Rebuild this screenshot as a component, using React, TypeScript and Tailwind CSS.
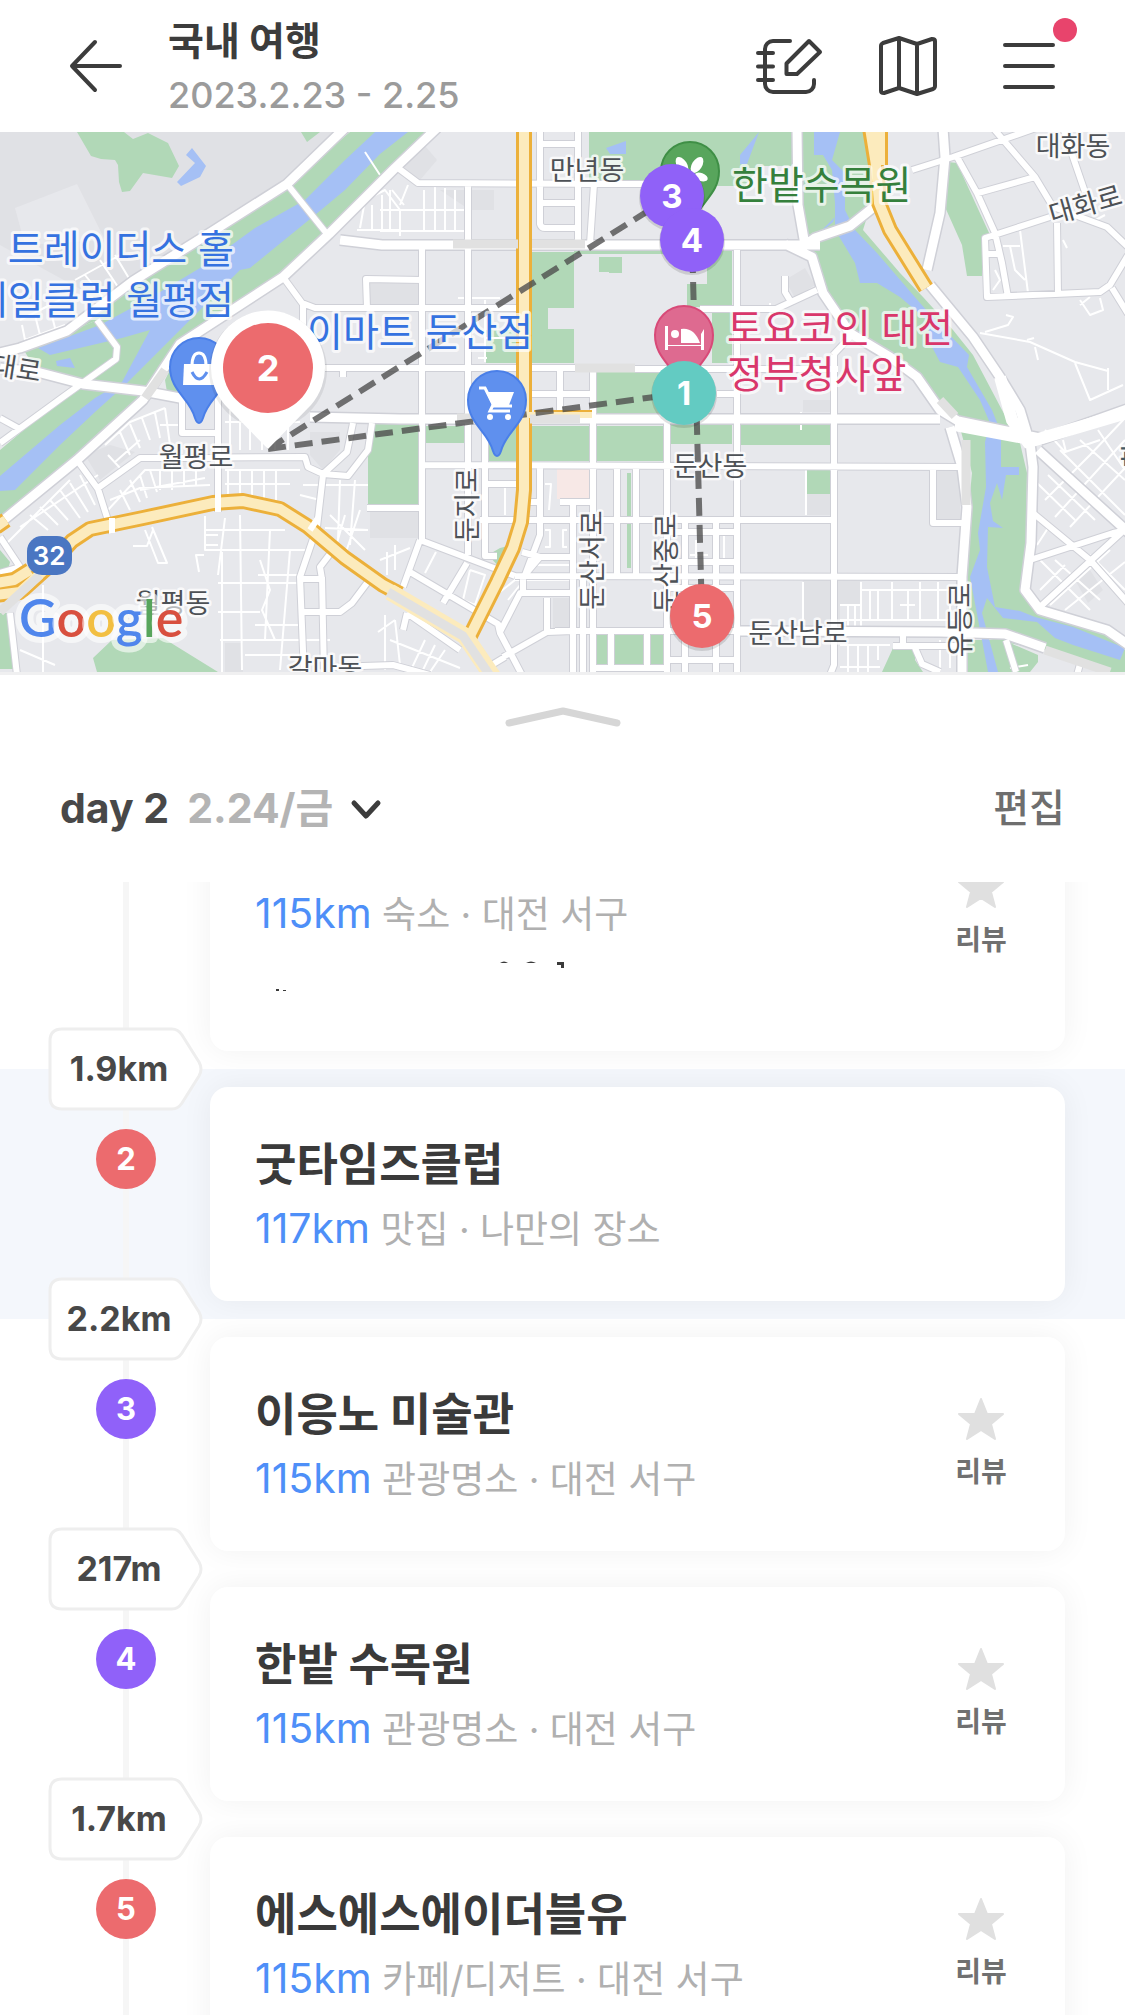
import clsx from "clsx";

type Place = {
  order: number;
  name: string;
  distance: string;
  category: string;
  color: string;
  next?: string;
  review?: boolean;
  memo?: boolean;
  active?: boolean;
};

const places: Place[] = [
  {
    order: 1,
    name: "토요코인 대전 정부청사앞",
    distance: "115km",
    category: "숙소 · 대전 서구",
    color: "bg-[#63cbc2]",
    next: "1.9km",
    review: true,
    memo: true,
  },
  {
    order: 2,
    name: "굿타임즈클럽",
    distance: "117km",
    category: "맛집 · 나만의 장소",
    color: "bg-[#ec6b6e]",
    next: "2.2km",
    active: true,
  },
  {
    order: 3,
    name: "이응노 미술관",
    distance: "115km",
    category: "관광명소 · 대전 서구",
    color: "bg-[#9061f9]",
    next: "217m",
    review: true,
  },
  {
    order: 4,
    name: "한밭 수목원",
    distance: "115km",
    category: "관광명소 · 대전 서구",
    color: "bg-[#9061f9]",
    next: "1.7km",
    review: true,
  },
  {
    order: 5,
    name: "에스에스에이더블유",
    distance: "115km",
    category: "카페/디저트 · 대전 서구",
    color: "bg-[#ec6b6e]",
    review: true,
  },
];

const iconProps = {
  fill: "none",
  stroke: "#3c3c3c",
  strokeWidth: 4,
  strokeLinecap: "round" as const,
  strokeLinejoin: "round" as const,
};

const Header = () => (
  <header className="flex h-[132px] shrink-0 items-center bg-white px-[66px]">
    <button type="button" aria-label="뒤로" className="w-[60px]">
      <svg className="h-[60px] w-[60px]" viewBox="0 0 60 60" {...iconProps}>
        <path d="M29 6 6 30l23 24M6 30h48" />
      </svg>
    </button>
    <div className="ml-[42px] flex-1 pt-1 whitespace-nowrap">
      <h1 className="text-[39px] leading-[54px] font-bold text-[#3c3c3c]">
        국내 여행
      </h1>
      <p className="text-[36px] leading-[54px] font-medium text-[#9b9b9b]">
        2023.2.23 - 2.25
      </p>
    </div>
    <div className="flex items-center gap-14">
      <button type="button" aria-label="여행 기록">
        <svg className="h-[60px] w-[68px]" viewBox="756 37 68 60" {...iconProps}>
          <path d="M791 42h-17a8 8 0 0 0-8 8v35a8 8 0 0 0 8 8h33a8 8 0 0 0 8-8v-4" />
          <path d="M759 54h15M759 67.500h15M759 81h15" />
          <path d="M810 42l11 11-23 22h-10.500V64.500z" />
        </svg>
      </button>
      <button type="button" aria-label="지도">
        <svg className="h-[60px] w-[64px]" viewBox="880 36 64 60" {...iconProps}>
          <path d="M882 46q0-2 2-3l16-5 18 6 15-5q3-0 3 2v45q0 2-2 3l-16 5-18-6-15 5q-3 0-3-2zM900 39v48M918 44v48" />
        </svg>
      </button>
      <button type="button" aria-label="메뉴" className="relative">
        <svg className="h-[60px] w-[60px]" viewBox="999 36 60 60" {...iconProps}>
          <path d="M1005 45h48M1005 66h48M1005 87h48" />
        </svg>
        <span className="absolute -top-[18px] -right-[18px] h-6 w-6 rounded-full bg-[#e8446c]" />
      </button>
    </div>
  </header>
);

// roads are grouped by width so that the casing can be drawn under all of them
const wideRoads =
  "M345 128 287 184 213 231 133 281 67 331 20 348 0 353M437 128 395 168 329 234 283 277 180 344 143 400 77 460 0 523M340 240 382 245 820 245M0 368 37 372 83 384 143 391 180 398M310 417 400 419 940 419M797 128 798 205 805 245 815 238 850 226 875 206M785 244 812 257 823 293 850 333 890 357 917 377 940 410 958 421 1040 438M930 285 973 337 1000 377 1020 410 1030 443 1033 467 1031 543 1025 590 1040 610 1107 630 1130 646M1038 450 1130 534M1040 440 1130 408M943 128 945 157 940 213 927 270M950 427 962 467 967 507 962 577 962 675M740 631 940 632 1005 634 1045 648";

const roads =
  "M287 184 327 234M97 320 117 347 116 359 63 397 0 443M283 277 302 303 315 308 520 308M303 305 303 345M367 308 366 279 422 280M394 165 418 183 645 184M422 249V540M468 183V555M540 128V224Q541 228 545 228H578M578 128V244M540 144H578M540 203H578M594 184 590 244M325 368H575M635 369 838 369M737 250V675M834 355V665L830 675M667 420V675M593 368V675M560 368V418M528 394H593M717 394H737M422 465 962 467M480 520H832M515 576 962 577M555 631H745M485 484H518M528 502H540M560 502H593M485 425V556H497M540 465V535L525 575M573 505V675M583 576V675M617 468V576M636 468V576M912 170 953 157 1036 128M957 157 977 193 995 233 1002 263 1008 297M993 128 1035 177 1053 207 1107 227 1128 247M978 193 1035 177M1050 217 985 238 987 297 1100 292 1110 285 1128 255M1057 223 1058 293M1112 288 1128 314M1063 128 1085 192M985 254H1000M700 309 776 309 817 290M785 276V292L791 302M833 355 852 335M933 468V523H962M1033 513 1090 560 1128 603M1030 560 1113 533 1128 530M1040 607 1122 532M77 460 98 489 112 533M98 488 140 458 305 457 308 467 323 474 347 452 353 423M323 474 348 476 368 450 372 423M323 475 317 527 300 577 304 675M182 392V433H218M218 385V512M322 577 324 675M300 579H322L320 567 333 550M303 612H340L352 603 367 583M333 667 393 665 430 675M367 508H422M0 537 20 567 0 573M10 613 17 675M420 540 515 576M420 540 403 587M410 572 498 624 500 633 522 675M467 563 443 603M503 657 547 632 573 631M547 598V632M500 632 520 593H573M523 577V593M522 552 540 557H573M523 577 540 557M407 613 460 650M403 630 407 613M505 657 480 672M685 520V675M716 520V675M667 532H737M667 562H737M667 588H737M667 660H737M593 668H667M611 632V668M647 632V668M903 632V648M893 646H962M915 648 922 664 940 672M1006 640 1016 672M1080 664 1077 675M303 308V325M0 418 18 428M343 377V368";

const lanes =
  "M365 152 380 175M357 230 400 230M360 228 365 200 385 190 400 210M372 205 372 230M382 195 382 230M380 210H465M380 231H465M390 190V231M400 210V236M424 190V231M435 186V231M445 188V231M455 190V231M408 185 400 205M392 190 404 205M75 280 120 255M85 275 105 300M100 260 120 290M115 255 130 280M20 320 60 300M22 325 25 340 65 325M35 315 40 335M50 308 55 328M105 445 130 422 165 408M115 462 140 440M130 424 140 448M120 432 130 455M142 418 150 440M155 413 160 438M165 408 170 445M160 425H182M108 455 120 468M20 527 98 475M5 545 30 520 70 480M30 515 48 530M40 507 58 525M50 500 68 520M60 490 80 518M70 483 88 512M80 475 95 505M108 510 145 470 205 470M110 500 140 488 210 485M120 490 130 510M130 480 140 502M140 475 147 498M150 470 157 492M160 470V490M172 465V490M184 470V488M196 470V486M140 490 205 478M225 422H300M230 410V450M240 408V450M250 412V450M262 415V450M275 425V450M288 425V450M225 470H300M228 470V500M240 470V497M252 470V498M264 470V500M276 470V505M225 484H290M303 485H368M300 495 320 500M340 480 338 540M355 480 350 545M330 515 365 550M325 528 368 530M345 515 335 550M360 510 345 555M205 516 205 550H310M225 518 218 575M240 515 242 670M270 530 265 640M290 550 280 670M205 530H285M218 583H300M218 612H260M220 640H330M222 552 222 672M258 575H300M260 560 270 590 262 610 275 640M255 625H300M245 655H300M204 555H196L199 572M205 545H218M205 535H218M43 585V672M20 650 55 665M145 530 158 563 167 563 152 527M133 546H147L153 530M387 552V575M395 545V570M380 560 410 548M436 552 425 573M470 570 463 600 475 605 485 575 470 570M385 615V670M395 620 400 665M425 640 410 672M435 645 422 672M445 650 430 672M390 640 460 668M500 592 515 580H573M508 600 520 585M505 488V515M545 484H551L549 510M545 530H550V547H545M567 530H563V547H567M530 565H573M696 540V558M724 535V558M690 555H708M803 582V632M861 582V632M801 430V412M806 470V515M862 590H960M870 590V620M878 590V620M892 582V620M908 590V620M920 582V620M938 582V620M950 590V620M840 605H862M840 620H960M848 605V632M855 605V632M900 605H915M840 645H890M840 667H880M848 645V672M858 645V672M868 645V672M878 645V660M980 333 1030 342 1075 362 1108 371M985 332 1008 325 1013 317 1006 315M1035 347 1038 360M1027 340 1034 338M1075 363 1090 400 1123 385M1108 368V390M1003 246H1020M1010 246 1015 270 1025 280M1020 230 1028 293M1092 222 1105 215M1080 300 1090 315 1103 310 1100 298M1080 305 1090 297M1045 430 1065 452 1100 440M1063 440 1066 452M1098 430 1125 470M1045 500 1090 455 1125 418M1055 517 1125 440M1070 527 1125 468M1080 440 1125 480M1060 450 1125 515M1048 475 1095 520M1037 483 1075 520M1037 545 1050 525M1040 560 1090 610M1055 560 1100 600M1040 590 1065 565M1050 605 1110 550M1065 610 1125 562M1090 555 1125 590M993 290 1000 280 995 270M1063 240 1067 248M458 298H500M485 300V362M486 338H520M478 358H487M940 640V668M950 645V668M1010 668 1028 665M378 632 395 620M770 303V330";

const highways =
  "M524 128V410L524 490 521 522 513 548 497 582 470 636M-4 595 20 592 50 565 72 541 90 529 143 518 213 503 243 501 280 509 307 526 345 558 383 585 400 594M-4 583 14 580 30 570M870 128 876 165 879 203 890 230 926 288M880 128V165M-4 527 6 520";

type PinProps = { x: number; y: number; fill: string; stroke: string };

const Pin = ({ x, y, fill, stroke }: PinProps) => (
  <path
    transform={`translate(${x} ${y})`}
    d="M0 56c-2 0-3-2-4-5C-9 31-29 24-29 0a29 29 0 0 1 58 0C29 24 9 31 4 51c-1 3-2 5-4 5z"
    fill={fill}
    stroke={stroke}
    strokeWidth="2"
  />
);

const Marker = ({ x, y, fill, n }: { x: number; y: number; fill: string; n: number }) => (
  <g>
    <circle cx={x} cy={y + 2} r="33" fill="#000" opacity="0.12" />
    <circle cx={x} cy={y} r="32" fill={fill} />
    <text x={x} y={y + 12} textAnchor="middle" fontSize="33" fontWeight="700" fill="#fff">
      {n}
    </text>
  </g>
);

const TripMap = () => (
  <section aria-label="지도" className="h-[543px] shrink-0 border-b-[3px] border-[#f0f0f1] bg-[#e7e8ec]">
    <svg
      className="h-full w-full"
      viewBox="0 132 1125 540"
      preserveAspectRatio="xMidYMid slice"
    >
      {/* Terrain */}
      <rect x="0" y="132" width="1125" height="540" fill="#e7e8ec" />
      <g fill="#e0e1e5">
        <path d="M0 132H345L287 184 133 281 100 300 0 245z" />
        <path d="M370 283H418V305H370zM382 285H420V307H382zM440 190H494V210H470zM380 155 420 140 437 160 420 180 400 175z" />
        <path d="M310 432H340V450L323 470 310 455zM370 512H420V538H370zM85 455 110 445 135 452 100 480zM225 643H243V672H225zM553 598H570V628H553zM937 470H960V520H937zM807 494H832V515H807zM803 580H860V604H840V630H803zM803 400H832V412H803zM1075 580 1090 570 1103 590 1088 603zM785 280 805 268 815 285 795 298z" />
      </g>
      <path d="M15 208 77 184 105 240 25 245z" fill="#e7e8ec" />

      {/* Parks */}
      <g fill="#b1d8b7">
        <path d="M77 132 91 156 101 159 115 160 118 165 119 182 122 192 130 191 143 173 172 178 179 166 168 143 148 133 133 139 124 132zM301 132 307 142 320 132z" />
        <path d="M350 132H433L395 168 329 234 283 277 180 344 143 400 77 460 0 523V450L63 397 116 359 117 347 97 320 25 352 67 331 133 281 213 231 287 184z" />
        <path d="M25 352 97 320 117 347 112 362 83 384 37 372z" />
        <path d="M165 380 175 360 180 395 167 392z" />
        <path d="M589 132H795V166H760L745 186H589zM802 132H868L876 203 867 217 863 230 900 273 923 297 953 330 973 355 1002 410 1020 443 1027 473 1025 590 1040 613 1107 635 1125 650V672H1110L1045 650 962 634 962 577 972 473 958 420 940 410 917 373 857 333 830 297 812 253 808 237 802 213z" />
        <path d="M967 640H1003L1038 655V662L1030 672H967zM948 162 957 163 990 235 982 240V276H967L962 245 945 207zM893 648H915V660L923 672H882z" />
        <path d="M532 252H574V308H548V329H574V363H532zM574 250H732V254H574zM599 257H622V273H609V272H599zM707 252H732V307H687V284H707zM712 312H732V363H712zM486 330H520V363H486z" />
        <path d="M368 424H418V505H368zM426 426H464V443H426zM487 426H516V461H487zM532 426H590V461H532zM597 426H663V461H597zM671 425H732V444H671zM740 425H830V445H740zM807 470H830V494H807zM597 372H667V413H597zM627 473H631V568H627zM595 635H608V664H595zM615 635H644V664H615zM650 635H663V664H650zM488 555 500 548 512 545 502 570z" />
        <path d="M93 658 112 640 163 638 218 672H97zM0 613H8L13 669H0zM0 550 10 562 8 570 0 572z" />
      </g>
      <path d="M557 468H589V499H557z" fill="#f7e8e6" />

      {/* Water */}
      <g fill="#a5c0f5">
        <path d="M192 148 206 166 200 177 181 186 177 182 195 163 186 155z" />
        <path d="M375 132H408L380 154 345 190 315 215 250 268 240 270 200 310 165 345 125 385 95 412 60 445 15 490 0 491V476L60 425 95 398 122 382 150 330 122 338 50 355 38 348 100 325 150 298 200 268 255 228 305 200 345 160z" />
        <path d="M56 361 70 358 75 368 57 366zM606 148 626 141V154H610zM759 132 747 164 740 164V155z" />
        <path d="M814 132H840L832 160 845 173 845 210 855 230 877 253 920 303 940 325 969 355 967 367 992 410 998 425 1001 437V467H1019V475H1006L1002 500 997 483 990 503 993 521 1003 528 988 527 987 567 995 607 1020 611 1035 617 1073 627 1125 648 1120 660 1073 645 1055 638 1037 622 1003 618 987 598 982 613 998 672H988L970 577 980 550 978 533 986 487 985 442 990 423 980 400 958 367 940 362 932 347 927 320 900 297 877 283H860L855 263 840 238 835 230V203L832 170 823 155 814 155zM815 237 835 217 833 222z" />
      </g>

      {/* Roads */}
      <g fill="none" strokeLinejoin="round">
        <path d={lanes} stroke="#fff" strokeWidth="2" />
        <path d={roads} stroke="#cfd0d7" strokeWidth="8" />
        <path d={wideRoads} stroke="#cfd0d7" strokeWidth="12" />
        <path d={roads} stroke="#fff" strokeWidth="6" />
        <path d={wideRoads} stroke="#fff" strokeWidth="9" />
        <path d={highways} stroke="#ecb03a" strokeWidth="16" />
        <path d="M534 413H592" stroke="#ecb03a" strokeWidth="6" />
        <path d={highways} stroke="#fcebbd" strokeWidth="10" />
        <path d="M524 415H592" stroke="#fcebbd" strokeWidth="6" />
        <path d="M390 592 465 636 495 680" stroke="#fcebbd" strokeWidth="17" />
        <path d="M388 592 463 636 493 680M453 244H518M532 244H585M575 368H635M530 419H580M457 418H475M0 612 40 575M145 398 165 370M1045 650 1110 672M940 400 955 416M966 440V505" stroke="#e1e1e1" strokeWidth="9" />
        <path d="M218 490V512M112 518V533M310 530 318 518" stroke="#fff" strokeWidth="6" />
      </g>
      <path d="M524 132V420" stroke="#fcebbd" strokeWidth="10" />
      <path d="M1000 377 1012 420 1030 445M955 425 1035 440 1130 412" fill="none" stroke="#fff" strokeWidth="12" />

      {/* Place labels */}
      <g
        fill="#4d5156"
        fontSize="27"
        stroke="#fff"
        strokeWidth="5"
        strokeOpacity="0.8"
        strokeLinejoin="round"
        paintOrder="stroke"
        textAnchor="middle"
      >
        <text x="587" y="180">만년동</text>
        <text x="710" y="476">둔산동</text>
        <text x="173" y="613">월평동</text>
        <text x="325" y="678">갈마동</text>
        <text x="1073" y="156">대화동</text>
        <text x="196" y="467">월평로</text>
        <text x="798" y="643">둔산남로</text>
        <text transform="translate(1088 214) rotate(-16)">대화로</text>
        <text transform="translate(15 378) rotate(9)">대로</text>
        <text transform="translate(477 505) rotate(-90)">둔지로</text>
        <text transform="translate(602 560) rotate(-90)">둔산서로</text>
        <text transform="translate(676 563) rotate(-90)">둔산중로</text>
        <text transform="translate(970 620) rotate(-90)">유등로</text>
        <text transform="translate(1144 455) rotate(-90)" fill="#455a64">한</text>
      </g>

      {/* Google */}
      <text
        x="19"
        y="637"
        fontSize="52"
        fontWeight="600"
        className="font-['Lato',sans-serif]"
        stroke="#fff"
        strokeOpacity="0.6"
        strokeWidth="12"
        strokeLinejoin="round"
        paintOrder="stroke"
      >
        <tspan fill="#4f86ec">G</tspan>
        <tspan fill="#d8503f">o</tspan>
        <tspan fill="#f2bf42">o</tspan>
        <tspan fill="#4f86ec">g</tspan>
        <tspan fill="#58a55c">l</tspan>
        <tspan fill="#d8503f">e</tspan>
      </text>

      <rect x="27" y="536" width="45" height="39" rx="15" fill="#4a76c2" />
      <text x="49" y="565" textAnchor="middle" fontSize="26" fontWeight="600" fill="#fff">
        32
      </text>

      {/* Route */}
      <path
        d="M268 449 684 393M268 449 672 196 692 240 702 616"
        fill="none"
        stroke="#4b4b4b"
        strokeOpacity="0.78"
        strokeWidth="6"
        strokeDasharray="18 9"
      />

      {/* Map pins */}
      <Pin x={199} y={367} fill="#5f90ee" stroke="#4a7fe8" />
      <path d="M184 364h30l2 21h-33z" fill="#fff" />
      <path d="M192 366q0-13 7-13t7 13" fill="none" stroke="#fff" strokeWidth="3" />
      <path d="M192 372q7 14 15 0" fill="none" stroke="#5f90ee" strokeWidth="3" />

      <Pin x={497} y={400} fill="#5f90ee" stroke="#4a7fe8" />
      <path d="M479 388h6l9 18h18" fill="none" stroke="#fff" strokeWidth="3" />
      <path d="M486 392h28l-5 13h-17z" fill="#fff" />
      <path d="M493 405l-3 6h20" fill="none" stroke="#fff" strokeWidth="3" />
      <circle cx="490" cy="417" r="3" fill="#fff" />
      <circle cx="508" cy="417" r="3" fill="#fff" />

      <Pin x={690} y={171} fill="#58a55c" stroke="#3f8f46" />
      <g fill="#fff">
        <ellipse cx="682" cy="165" rx="5" ry="9" transform="rotate(-32 682 165)" />
        <ellipse cx="697" cy="165" rx="5" ry="9" transform="rotate(32 697 165)" />
        <ellipse cx="701" cy="177" rx="7" ry="4" transform="rotate(20 701 177)" />
      </g>

      <Pin x={684} y={335} fill="#de6a90" stroke="#d84a78" />
      <g fill="#fff">
        <path d="M665 326h3v19h33v-11l3-5v21h-3v-4h-33v4h-3z" />
        <circle cx="675" cy="334" r="4" />
        <path d="M681 329q13-2 19 14h-19z" />
      </g>

      <g
        fontSize="39"
        stroke="#fff"
        strokeWidth="6"
        strokeOpacity="0.7"
        strokeLinejoin="round"
        paintOrder="stroke"
      >
        <text x="234" y="263" textAnchor="end" fill="#3572e0">트레이더스 홀</text>
        <text x="234" y="314" textAnchor="end" fill="#3572e0">세일클럽 월평점</text>
        <text x="307" y="346" fill="#3572e0">이마트 둔산점</text>
        <text x="732" y="199" fill="#35803c">한밭수목원</text>
        <text x="727" y="342" fill="#d9376b">토요코인 대전</text>
        <text x="727" y="388" fill="#d9376b">정부청사앞</text>
      </g>

      {/* Day stops */}
      <Marker x={672} y={196} fill="#9061f8" n={3} />
      <Marker x={692} y={240} fill="#9061f8" n={4} />
      <Marker x={684} y={393} fill="#63cbc2" n={1} />
      <Marker x={702} y={616} fill="#ec6b6e" n={5} />
      <circle cx="268" cy="370" r="59" fill="#000" opacity="0.07" />
      <path d="M268 449 225 405A57 57 0 1 1 311 405z" fill="#fff" />
      <circle cx="268" cy="368" r="45" fill="#ec6b6e" />
      <text x="268" y="381" textAnchor="middle" fontSize="36" fontWeight="700" fill="#fff">
        2
      </text>
    </svg>
  </section>
);

const SheetHeader = () => (
  <div className="shrink-0">
    <button type="button" aria-label="목록 펼치기" className="mx-auto block pt-[30px] pb-[6px]">
      <svg className="h-6 w-[120px]" viewBox="0 0 120 24" fill="none" stroke="#d6d6d6" strokeWidth="7" strokeLinecap="round" strokeLinejoin="round">
        <path d="M6 18 60 6l54 12" />
      </svg>
    </button>
    <div className="flex h-[147px] items-center justify-between px-[60px]">
      <button type="button" className="flex items-center text-[41px] font-bold text-[#484848]">
        day 2
        <span className="ml-[18px] text-[#b4b4b4]">2.24/금</span>
        <svg className="ml-[15px] h-9 w-9" viewBox="0 0 36 36" fill="none" stroke="#3c3c3c" strokeWidth="5" strokeLinecap="round" strokeLinejoin="round">
          <path d="M6 12l12 13 12-13" />
        </svg>
      </button>
      <button type="button" className="text-[39px] font-medium text-[#6e6e6e]">
        편집
      </button>
    </div>
  </div>
);

const DistanceTag = ({ label }: { label: string }) => (
  <div className="absolute -bottom-[42px] left-12 z-10 h-[84px] w-[156px]">
    <svg className="absolute inset-0 h-full w-full" viewBox="0 0 156 84" fill="#fff" stroke="#eeeeee" strokeWidth="3">
      <path d="M14 2H124q6 0 10 6l17 27q4 7 0 14l-17 27q-4 6-10 6H14Q2 82 2 70V14Q2 2 14 2z" />
    </svg>
    <span className="relative block pr-[14px] text-center text-[34px] leading-[84px] font-bold text-[#484848]">
      {label}
    </span>
  </div>
);

const PlaceRow = ({ place }: { place: Place }) => (
  <li className={clsx("relative flex", place.active && "bg-[#f4f7fc]")}>
    <div className="ml-24 flex w-[60px] flex-col items-center">
      <div className="h-[60px] w-[6px] bg-[#f6f6f6]" />
      <span
        className={clsx(
          "flex h-[60px] w-[60px] items-center justify-center rounded-full text-[31px] font-bold text-white",
          place.color,
        )}
      >
        {place.order}
      </span>
      <div className="w-[6px] flex-1 bg-[#f6f6f6]" />
    </div>
    <div className="min-w-0 flex-1 overflow-hidden py-[18px] pr-[60px] pl-[54px]">
      <article className="flex items-center rounded-[18px] bg-white pt-12 pr-9 pb-11 pl-[45px] shadow-[0_0_32px_rgba(0,0,0,0.06)]">
        <div className="min-w-0 flex-1 whitespace-nowrap">
          <h2 className="text-[45px] leading-[60px] font-bold text-[#3a3a3a]">
            {place.name}
          </h2>
          <p className="mt-2 text-[37px] leading-[54px] text-[#b0b0b0]">
            <span className="text-[41px] leading-none text-[#4e8ff8]">
              {place.distance}
            </span>{" "}
            {place.category}
          </p>
          {/* Collapsed memo, only the tips of its letters show */}
          {place.memo && (
            <svg className="h-[65px] w-80" viewBox="256 942 320 65">
              <path d="M501 963q4-3 8 0zM527 963q5-3 10 0zM558 962h7v6h-3v-3h-4zM277 989h3v2h-3zM284 990h3v1h-3z" fill="#3a3a3a" />
            </svg>
          )}
        </div>
        {place.review && (
          <button type="button" className="flex w-24 flex-col items-center pb-[6px] text-[28px] leading-9 font-bold text-[#707070]">
            <svg className="mb-[10px] h-12 w-12" viewBox="0 0 48 48" fill="#e0e0e0" stroke="#e0e0e0" strokeWidth="2" strokeLinejoin="round">
              <path d="M24 3l6 15h16L34 28l4 15-14-9-14 9 4-15L2 18h16z" />
            </svg>
            리뷰
          </button>
        )}
      </article>
    </div>
    {place.next && <DistanceTag label={place.next} />}
  </li>
);

const App = () => {
  return (
    <div className="flex h-screen flex-col overflow-hidden bg-white font-['Inter','Noto_Sans_CJK_KR',sans-serif]">
      <Header />
      <TripMap />
      <SheetHeader />
      <main className="min-h-0 flex-1 overflow-y-auto [scrollbar-width:none]">
        <ul className="-mt-[128px]">
          {places.map((place) => (
            <PlaceRow key={place.order} place={place} />
          ))}
        </ul>
      </main>
    </div>
  );
};

export default App;
